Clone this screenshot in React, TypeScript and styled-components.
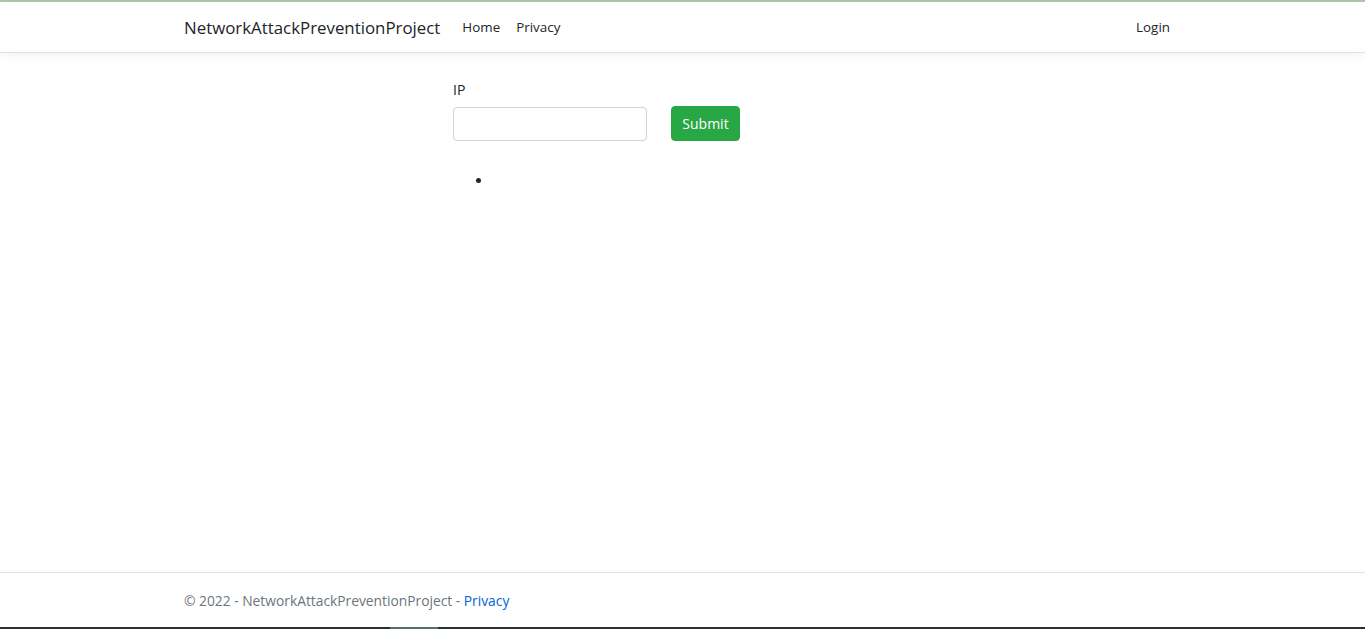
import { createGlobalStyle, styled } from 'styled-components';

const GlobalStyle = createGlobalStyle`
  html, body {
    margin: 0;
    padding: 0;
    height: 100%;
  }
  body {
    font-family: "Open Sans", "Noto Sans", sans-serif;
    font-size: 14px;
    color: #212529;
    background: #fff;
  }
  #root {
    height: 100%;
  }
`;

export default function App() {
  return (
    <>
      <GlobalStyle />
      <Page>
        <TopLine />
        <Navbar>
          <Container>
            <Brand href="#">NetworkAttackPreventionProject</Brand>
            <NavList>
              <NavLink href="#">Home</NavLink>
              <NavLink href="#">Privacy</NavLink>
            </NavList>
            <NavRight>
              <NavLink href="#">Login</NavLink>
            </NavRight>
          </Container>
        </Navbar>

        <Main>
          <Container>
            <FormBlock>
              <Label htmlFor="ip">IP</Label>
              <FormRow>
                <Input id="ip" type="text" />
                <SubmitButton type="button">Submit</SubmitButton>
              </FormRow>
              <ResultList>
                <li></li>
              </ResultList>
            </FormBlock>
          </Container>
        </Main>

        <Footer>
          <Container>
            © 2022 - NetworkAttackPreventionProject -&nbsp;<FooterLink href="#">Privacy</FooterLink>
          </Container>
        </Footer>
        <BottomBar>
          <BottomThumb />
        </BottomBar>
      </Page>
    </>
  );
}

const Page = styled.div`
  min-height: 100%;
  height: 629px;
  display: flex;
  flex-direction: column;
`;

const TopLine = styled.div`
  height: 2px;
  background: #a9c9a4;
`;

const Container = styled.div`
  width: 997px;
  margin: 0 auto;
  display: flex;
  align-items: center;
`;

const Navbar = styled.nav`
  height: 50px;
  border-bottom: 1px solid #dee2e6;
  box-shadow: 0 4px 10px -2px rgba(0, 0, 0, 0.06);
  display: flex;
  align-items: center;
  background: #fff;
  position: relative;
  z-index: 1;
`;

const Brand = styled.a`
  font-size: 16.85px;
  color: #212529;
  text-decoration: none;
  margin-right: 14px;
`;

const NavList = styled.div`
  display: flex;
  flex: 1;
`;

const NavRight = styled.div`
  display: flex;
  margin-right: 3px;
`;

const NavLink = styled.a`
  color: #212529;
  text-decoration: none;
  font-size: 13.4px;
  padding: 8px 8px;
`;

const Main = styled.main`
  flex: 1;
`;

const FormBlock = styled.div`
  margin-left: 269px;
  padding-top: 27px;
  display: flex;
  flex-direction: column;
`;

const Label = styled.label`
  font-size: 14px;
  line-height: 20px;
  margin-bottom: 6px;
`;

const FormRow = styled.div`
  display: flex;
  align-items: center;
  gap: 24px;
`;

const Input = styled.input`
  box-sizing: border-box;
  width: 194px;
  height: 34px;
  border: 1px solid #ced4da;
  border-radius: 4px;
  padding: 6px 12px;
  font-family: inherit;
  font-size: 14px;
  outline: none;
`;

const SubmitButton = styled.button`
  box-sizing: border-box;
  width: 69px;
  height: 35px;
  background: #28a745;
  border: 1px solid #28a745;
  border-radius: 4px;
  color: #fff;
  font-family: inherit;
  font-size: 14px;
  cursor: pointer;
`;

const ResultList = styled.ul`
  margin: 30px 0 0;
  padding-left: 40px;
  li {
    height: 20px;
    line-height: 20px;
  }
`;

const Footer = styled.footer`
  border-top: 1px solid #dee2e6;
  height: 54px;
  display: flex;
  align-items: center;
  color: #6c757d;
  font-size: 13.8px;
`;

const FooterLink = styled.a`
  color: #0366d6;
  text-decoration: none;
`;

const BottomBar = styled.div`
  height: 2px;
  background: #263238;
  position: relative;
`;

const BottomThumb = styled.div`
  position: absolute;
  left: 390px;
  width: 48px;
  top: 0;
  height: 2px;
  background: #5f6b72;
`;
